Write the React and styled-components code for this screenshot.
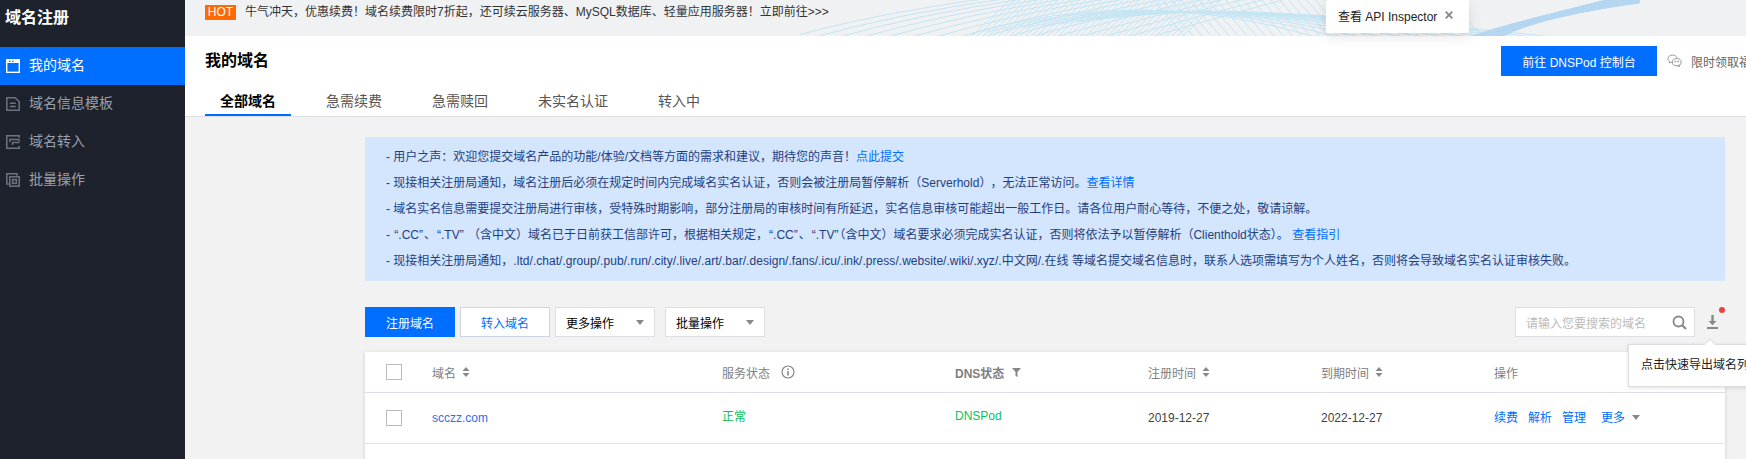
import React from "react";
import styled, { createGlobalStyle } from "styled-components";

const Global = createGlobalStyle`
  html, body { margin: 0; padding: 0; height: 100%; overflow: hidden; }
  body { font-family: "Liberation Sans", "Noto Sans CJK SC", sans-serif; font-size: 12px; }
  * { box-sizing: border-box; }
  a { text-decoration: none; }
`;

const Page = styled.div`
  display: flex; width: 1746px; height: 459px; overflow: hidden; background: #f2f2f2;
`;
const Sidebar = styled.aside`
  width: 185px; flex: none; background: #1e222d; color: #fff;
`;
const SideTitle = styled.div`
  height: 47px; padding: 4px 0 0 5px; font-size: 16px; font-weight: 700; line-height: 28px; color: #fff;
`;
const SideItem = styled.div`
  height: 38px; display: flex; align-items: center; padding: 0 0 1px 6px; gap: 9px;
  font-size: 14px; line-height: 18px; background: ${p => (p.$active ? "#006eff" : "transparent")};
  color: ${p => (p.$active ? "#fff" : "#9aa0aa")};
`;
const SideLabel = styled.span`
  position: relative; top: -1px;
`;
const Main = styled.main`
  flex: 1; min-width: 0; position: relative;
`;
const Banner = styled.div`
  height: 36px; background: #f0f1f3; padding: 5px 0 0 20px; display: flex; align-items: flex-start; gap: 9px;
  position: relative; overflow: hidden;
`;
const Hot = styled.span`
  background: #ff6a00; color: #fff; font-size: 12px; width: 31px; height: 15px; line-height: 15px; text-align: center; position: relative; z-index: 1;
`;
const BannerText = styled.span`
  color: #333; font-size: 12px; line-height: 15px; position: relative; z-index: 1;
`;
const Wave = styled.svg`
  position: absolute; left: 615px; top: 0;
`;
const Tip = styled.div`
  position: absolute; left: 1141px; top: 0; width: 143px; height: 33px; background: #fff; z-index: 3;
  box-shadow: 0 4px 14px rgba(0,0,0,.1); display: flex; align-items: center; padding: 0 0 3px 12px; gap: 8px;
  font-size: 12px; color: #222;
`;
const Header = styled.div`
  background: #fff; height: 81px; border-bottom: 1px solid #dcdfe3; padding: 0 0 0 20px;
`;
const HeaderTop = styled.div`
  display: flex; justify-content: space-between; height: 50px; padding-top: 10px;
`;
const H1 = styled.h1`
  margin: 1px 0 0; font-size: 16px; font-weight: 700; color: #000; line-height: 28px;
`;
const HeaderRight = styled.div`
  display: flex; align-items: center; gap: 10px; height: 30px; flex: none; width: 245px;
`;
const PrimaryLarge = styled.a`
  width: 156px; height: 30px; flex: none; background: #006eff; color: #fff; font-size: 12px;
  display: flex; align-items: center; justify-content: center;
`;
const Gift = styled.span`
  color: #666; font-size: 12px; display: inline-flex; gap: 9px; align-items: center; white-space: nowrap; flex: none;
`;
const Tabs = styled.nav`
  display: flex; height: 30px; gap: 20px;
`;
const Tab = styled.a`
  padding: 0 15px; text-align: center; font-size: 14px; line-height: 30px; height: 30px;
  color: ${p => (p.$active ? "#000" : "#555")}; font-weight: ${p => (p.$active ? 700 : 400)};
  border-bottom: 2px solid ${p => (p.$active ? "#006eff" : "transparent")};
`;
const Content = styled.div`
  padding: 20px 0 0 180px; width: 1540px;
`;
const Notice = styled.div`
  width: 1360px; height: 144px; background: #d4e5fe; padding: 7px 0 0 21px; color: #1d3f80;
  font-size: 12px;
`;
const NoticeLine = styled.p`
  margin: 0; height: 26px; line-height: 26px; white-space: nowrap;
`;
const NoticeLink = styled.a`
  color: #006eff;
`;
const Quoted = styled.span`
  padding: 0 1px;
`;
const Bracketed = styled.span`
  padding-right: 5px;
`;
const DomainList = styled.span`
  letter-spacing: .04px;
`;
const Toolbar = styled.div`
  display: flex; align-items: center; height: 30px; margin-top: 26px; gap: 5px; position: relative;
`;
const BtnPrimary = styled.a`
  width: 90px; height: 30px; background: #006eff; color: #fff; display: flex; align-items: center; justify-content: center; font-size: 12px;
`;
const BtnLine = styled.a`
  width: 90px; height: 30px; background: #fff; border: 1px solid #cfd5de; color: #006eff; display: flex; align-items: center; justify-content: center; font-size: 12px;
`;
const Select = styled.div`
  width: 100px; height: 30px; background: #fff; border: 1px solid #dddfe3; color: #000; display: flex; align-items: center; justify-content: space-between; padding: 0 10px; margin-left: ${p => p.$ml || 0}px; font-size: 12px;
`;
const Caret = styled.i`
  width: 0; height: 0; border-left: 4px solid transparent; border-right: 4px solid transparent; border-top: 5px solid #888; display: inline-block; margin-left: ${p => p.$ml || 0}px;
`;
const ToolRight = styled.div`
  margin-left: auto; display: flex; align-items: center; gap: 12px; padding-right: 7px;
`;
const Search = styled.div`
  width: 180px; height: 30px; background: #fff; border: 1px solid #dddfe3; display: flex; align-items: center; justify-content: space-between; padding: 0 7px 0 10px; color: #bbb; font-size: 12px;
`;
const DownloadWrap = styled.div`
  position: relative; width: 11px; height: 14px; display: flex; margin-bottom: 1px;
`;
const Dot = styled.span`
  position: absolute; left: 12px; top: -8px; width: 6px; height: 6px; border-radius: 50%; background: #e54545;
`;
const Table = styled.div`
  margin-top: 15px; background: #fff; width: 1360px; height: 107px; box-shadow: 0 1px 4px rgba(0,0,0,.15);
`;
const Row = styled.div`
  display: grid; grid-template-columns: 67px 290px 233px 193px 173px 173px 1fr; align-items: center;
  height: ${p => p.$h}px; border-bottom: 1px solid ${p => p.$line};
`;
const CheckCell = styled.div`
  padding-left: 21px; display: flex;
`;
const Check = styled.span`
  width: 16px; height: 16px; border: 1px solid #bbb; background: #fff; display: block;
`;
const Th = styled.div`
  color: #808080; font-size: 12px; display: flex; align-items: center; font-weight: ${p => (p.$bold ? 700 : 400)};
`;
const Td = styled.div`
  font-size: 12px; line-height: 16px; color: ${p => p.$c || "#444"}; display: flex; align-items: center;
  padding-bottom: ${p => p.$lift || 1}px;
`;
const ActionLink = styled.a`
  color: #006eff; margin-left: ${p => p.$ml || 0}px;
`;
const Pop = styled.div`
  position: absolute; left: 1263px; top: 37px; width: 130px; height: 43px; background: #fff; border: 1px solid #ddd;
  box-shadow: 0 1px 4px rgba(0,0,0,.12); color: #222; font-size: 12px; line-height: 41px; padding-left: 12px; white-space: nowrap; overflow: hidden; z-index: 3;
`;
const PopArrow = styled.i`
  position: absolute; left: 1341px; top: 33px; width: 8px; height: 8px; background: #fff; border: 1px solid #ddd; border-right: 0; border-bottom: 0;
  transform: rotate(45deg); z-index: 4;
`;
const IconWrap = styled.span`
  display: inline-flex; margin-left: ${p => p.$ml || 0}px;
`;

const Sort = ({ ml = 6 }) => (
  <IconWrap $ml={ml}>
    <svg width="8" height="10" viewBox="0 0 8 10" fill="#888"><path d="M4 0 7.500 4H.5zM4 10 .5 6h7z" /></svg>
  </IconWrap>
);

const IconDomain = () => (
  <svg width="14" height="14" viewBox="0 0 14 14" fill="none">
    <rect x=".7" y=".7" width="12.6" height="12.6" stroke="#fff" strokeWidth="1.4" />
    <path d="M0 0h14v4H0zM3 1.400v1.600h1.400V1.400zM6 1.400v1.600h1.400V1.400z" fill="#fff" fillRule="evenodd" />
  </svg>
);
const IconTemplate = () => (
  <svg width="14" height="14" viewBox="0 0 14 14" fill="none" stroke="#6d7480" strokeWidth="1.5">
    <path d="M.8.8h8.400l4 4v8.400H.8z" /><path d="M3.800 6.200h6M3.800 9.400h6" />
  </svg>
);
const IconTransfer = () => (
  <svg width="14" height="14" viewBox="0 0 14 14" fill="none" stroke="#6d7480" strokeWidth="1.5">
    <path d="M13.200 2.800V.8H.8v12.400h12.400V11M13.200 4.500H3.800V7M13.200 4.500v2M13.200 7.500H6.500v2.500" />
  </svg>
);
const IconBatch = () => (
  <svg width="14" height="14" viewBox="0 0 14 14" fill="none" stroke="#6d7480" strokeWidth="1.5">
    <path d="M11 2.800V.8H.8V11h2" /><rect x="3.800" y="3.800" width="9.400" height="9.400" /><rect x="6.600" y="6.600" width="3.800" height="3.800" />
  </svg>
);
const IconWechat = () => (
  <svg width="15" height="14" viewBox="0 0 15 14" fill="none" stroke="#999" strokeWidth="1">
    <path d="M5.600 1C3 1 1 2.700 1 4.800c0 1.200.7 2.200 1.700 2.900L2.400 9l1.500-.8c.5.1 1 .2 1.500.2" />
    <path d="M5.600 1c2.200 0 4 1.200 4.500 2.900" />
    <ellipse cx="9.700" cy="8.200" rx="4.400" ry="3.600" />
    <path d="m12 11 .6 1.600L10.800 11.800" />
    <circle cx="8.200" cy="7.600" r=".5" fill="#999" /><circle cx="11.200" cy="7.600" r=".5" fill="#999" />
  </svg>
);

/* guilloche lines of the banner artwork, x origin is page x = 800 */
const range = (n) => Array.from({ length: n }, (_, i) => i);
const waveRising = range(16).map(i => `M${-20 + i * 24} ${40}Q${70 + i * 24} 14 ${190 + i * 20} ${-2}`);
const waveDense = range(40).map(i => `M${170 + i * 5.4} 38L${214 + i * 5.4} -4`);
const waveArc = range(12).map(i => `M${170 + i * 18} ${34 - i * 2}Q${340 + i * 12} ${-16 + i * 2} ${520 + i * 22} 38`);
const waveHatch = range(34).map(i => `M${352 + i * 9} -2L${386 + i * 9} 38`);
const waveFan = range(22).map(i => `M${672 + i * 1.5} 36Q${700 + i * 2} ${26 - i * .5} ${810 + i * 2} ${-1 + i * .1}`);

const items = [
  ["我的域名", IconDomain, true],
  ["域名信息模板", IconTemplate],
  ["域名转入", IconTransfer],
  ["批量操作", IconBatch],
];

export default function App() {
  return (
    <Page>
      <Global />
      <Sidebar>
        <SideTitle>域名注册</SideTitle>
        {items.map(([t, I, a]) => (
          <SideItem key={t} $active={a}><I /><SideLabel>{t}</SideLabel></SideItem>
        ))}
      </Sidebar>
      <Main>
        <Banner>
          <Wave width="840" height="36" viewBox="0 0 840 36" fill="none" stroke="#c4e5f3" strokeWidth="1">
            <path d={waveRising.join("")} />
            <path d={waveDense.join("")} />
            <path d={waveArc.join("")} />
            <path d={waveHatch.join("")} />
            <path d={waveFan.join("")} stroke="#b4d6f0" />
          </Wave>
          <Hot>HOT</Hot>
          <BannerText>牛气冲天，优惠续费！域名续费限时7折起，还可续云服务器、MySQL数据库、轻量应用服务器！立即前往&gt;&gt;&gt;</BannerText>
        </Banner>
        <Tip>
          查看 API Inspector
          <svg width="8" height="8" viewBox="0 0 8 8" stroke="#888" strokeWidth="1.8"><path d="m.7.7 6.600 6.600M7.300.7.7 7.300" /></svg>
        </Tip>
        <Header>
          <HeaderTop>
            <H1>我的域名</H1>
            <HeaderRight>
              <PrimaryLarge>前往 DNSPod 控制台</PrimaryLarge>
              <Gift><IconWechat />限时领取福利</Gift>
            </HeaderRight>
          </HeaderTop>
          <Tabs>
            <Tab $active>全部域名</Tab>
            <Tab>急需续费</Tab>
            <Tab>急需赎回</Tab>
            <Tab>未实名认证</Tab>
            <Tab>转入中</Tab>
          </Tabs>
        </Header>
        <Content>
          <Notice>
            <NoticeLine>- 用户之声：欢迎您提交域名产品的功能/体验/文档等方面的需求和建议，期待您的声音！<NoticeLink>点此提交</NoticeLink></NoticeLine>
            <NoticeLine>- 现接相关注册局通知，域名注册后必须在规定时间内完成域名实名认证，否则会被注册局暂停解析<Bracketed>（Serverhold）</Bracketed>，无法正常访问。<NoticeLink>查看详情</NoticeLink></NoticeLine>
            <NoticeLine>- 域名实名信息需要提交注册局进行审核，受特殊时期影响，部分注册局的审核时间有所延迟，实名信息审核可能超出一般工作日。请各位用户耐心等待，不便之处，敬请谅解。</NoticeLine>
            <NoticeLine>- <Quoted>“.CC”</Quoted>、<Quoted>“.TV”</Quoted> （含中文）域名已于日前获工信部许可，根据相关规定，<Quoted>“.CC”</Quoted>、<Quoted>“.TV”</Quoted>（含中文）域名要求必须完成实名认证，否则将依法予以暂停解析（Clienthold状态）。 <NoticeLink>查看指引</NoticeLink></NoticeLine>
            <NoticeLine>- 现接相关注册局通知，<DomainList>.ltd/.chat/.group/.pub/.run/.city/.live/.art/.bar/.design/.fans/.icu/.ink/.press/.website/.wiki/.xyz/.中文网/.在线</DomainList> 等域名提交域名信息时，联系人选项需填写为个人姓名，否则将会导致域名实名认证审核失败。</NoticeLine>
          </Notice>
          <Toolbar>
            <BtnPrimary>注册域名</BtnPrimary>
            <BtnLine>转入域名</BtnLine>
            <Select>更多操作<Caret /></Select>
            <Select $ml={5}>批量操作<Caret /></Select>
            <ToolRight>
              <Search>
                请输入您要搜索的域名
                <svg width="15" height="15" viewBox="0 0 15 15" fill="none" stroke="#888" strokeWidth="1.8"><circle cx="6.500" cy="6.500" r="5" /><path d="m10 10 4 4" strokeWidth="2.200" /></svg>
              </Search>
              <DownloadWrap>
                <svg width="11" height="14" viewBox="0 0 11 14" fill="#888"><path d="M4.300 0h2.400v6h2.800l-4 4.200-4-4.200h2.800zM0 12h11v2H0z" /></svg>
                <Dot />
              </DownloadWrap>
            </ToolRight>
            <PopArrow />
            <Pop>点击快速导出域名列表</Pop>
          </Toolbar>
          <Table>
            <Row $h={41} $line="#dcdfe3">
              <CheckCell><Check /></CheckCell>
              <Th>域名<Sort /></Th>
              <Th>服务状态
                <IconWrap $ml={11}><svg width="14" height="14" viewBox="0 0 14 14" fill="none" stroke="#888"><circle cx="7" cy="7" r="6" strokeWidth="1.200" /><path d="M7 6v4.500M7 3.400v1.500" strokeWidth="1.600" /></svg></IconWrap>
              </Th>
              <Th $bold>DNS状态
                <IconWrap $ml={8}><svg width="9" height="9" viewBox="0 0 9 9" fill="#888"><path d="M0 0h9L5.500 4v5l-2-1V4z" /></svg></IconWrap>
              </Th>
              <Th>注册时间<Sort /></Th>
              <Th>到期时间<Sort /></Th>
              <Th>操作</Th>
            </Row>
            <Row $h={51} $line="#e4e6ea">
              <CheckCell><Check /></CheckCell>
              <Td $c="#2b6fe8">scczz.com</Td>
              <Td $c="#0abf5b" $lift={3}>正常</Td>
              <Td $c="#0abf5b" $lift={5}>DNSPod</Td>
              <Td>2019-12-27</Td>
              <Td>2022-12-27</Td>
              <Td>
                <ActionLink>续费</ActionLink>
                <ActionLink $ml={10}>解析</ActionLink>
                <ActionLink $ml={10}>管理</ActionLink>
                <ActionLink $ml={15}>更多</ActionLink>
                <Caret $ml={7} />
              </Td>
            </Row>
          </Table>
        </Content>
      </Main>
    </Page>
  );
}
